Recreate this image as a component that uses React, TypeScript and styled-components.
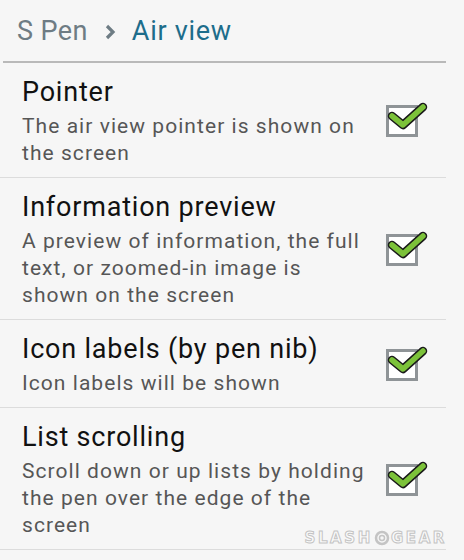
import React from 'react';
import styled, { createGlobalStyle } from 'styled-components';

const GlobalStyle = createGlobalStyle`
  html, body {
    margin: 0;
    padding: 0;
    background: #f6f6f6;
  }
  body {
    font-family: Roboto, "Noto Sans", "Liberation Sans", sans-serif;
    -webkit-font-smoothing: antialiased;
  }
`;

const Screen = styled.div`
  position: relative;
  width: 464px;
  height: 560px;
  overflow: hidden;
  background: #f6f6f6;
`;

const Header = styled.header`
  display: flex;
  align-items: center;
  gap: 16px;
  height: 61px;
  margin: 0 18px 0 3px;
  padding-left: 14px;
  border-bottom: 2px solid #b9b9b9;
  font-size: 27px;
`;

const Crumb = styled.span<{ $current?: boolean }>`
  color: ${({ $current }) => ($current ? '#1d6d8b' : '#6e7c84')};
  letter-spacing: ${({ $current }) => ($current ? '0.7px' : '0.4px')};
`;

const Chevron = styled.svg`
  width: 12px;
  height: 16px;
  margin-top: 2px;
`;

const List = styled.div`
  display: flex;
  flex-direction: column;
`;

const Row = styled.div`
  display: grid;
  grid-template-columns: 1fr 60px;
  align-items: center;
  column-gap: 6px;
  margin-right: 18px;
  padding: 12px 0 10px 22px;
  border-bottom: 1px solid #dcdcdc;
`;

const Texts = styled.div`
  display: flex;
  flex-direction: column;
  gap: 4px;
`;

const Title = styled.div`
  font-size: 27px;
  line-height: 34px;
  letter-spacing: 0.8px;
  color: #111;
  white-space: nowrap;
`;

const Description = styled.div`
  font-size: 21px;
  line-height: 27px;
  letter-spacing: 1.05px;
  color: #565656;
  max-width: 346px;
`;

const CheckBox = styled.span`
  position: relative;
  display: block;
  width: 26px;
  height: 26px;
  border: 3px solid #8f9497;
  background: #ffffff;
  justify-self: start;
`;

const CheckMark = styled.svg`
  position: absolute;
  left: 0;
  top: -6px;
  width: 38px;
  height: 30px;
  overflow: visible;
`;

const Watermark = styled.div`
  position: absolute;
  right: 17px;
  top: 529px;
  display: flex;
  align-items: center;
  gap: 1px;
  font-family: "DejaVu Sans", sans-serif;
  font-weight: bold;
  font-size: 15px;
  letter-spacing: 2.6px;
  color: #fbfbfb;
  -webkit-text-stroke: 1px #c4c4c4;
  pointer-events: none;
`;

const items = [
  { title: 'Pointer', desc: 'The air view pointer is shown on the screen' },
  {
    title: 'Information preview',
    desc: 'A preview of information, the full text, or zoomed-in image is shown on the screen',
  },
  { title: 'Icon labels (by pen nib)', desc: 'Icon labels will be shown' },
  {
    title: 'List scrolling',
    desc: 'Scroll down or up lists by holding the pen over the edge of the screen',
  },
];

const Check: React.FC = () => (
  <CheckBox>
    <CheckMark viewBox="0 0 38 30">
      <path
        d="M3 14 L14 23 L34 5"
        fill="none"
        stroke="#1a1a1a"
        strokeWidth="8.5"
        strokeLinecap="round"
        strokeLinejoin="round"
      />
      <path
        d="M3 14 L14 23 L34 5"
        fill="none"
        stroke="#7cc23a"
        strokeWidth="5.5"
        strokeLinecap="round"
        strokeLinejoin="round"
      />
    </CheckMark>
  </CheckBox>
);

const App: React.FC = () => {
  return (
    <Screen>
      <GlobalStyle />
      <Header>
        <Crumb>S Pen</Crumb>
        <Chevron viewBox="0 0 12 16">
          <path d="M3 2 L9 8 L3 14" fill="none" stroke="#6e7c84" strokeWidth="3.2" />
        </Chevron>
        <Crumb $current>Air view</Crumb>
      </Header>
      <List>
        {items.map((item) => (
          <Row key={item.title}>
            <Texts>
              <Title>{item.title}</Title>
              <Description>{item.desc}</Description>
            </Texts>
            <Check />
          </Row>
        ))}
      </List>
      <Watermark>
        <span>SLASH</span>
        <svg width="16" height="16" viewBox="0 0 16 16">
          <circle cx="8" cy="8" r="6" fill="none" stroke="#c4c4c4" strokeWidth="2.5" />
          <circle cx="8" cy="8" r="2.5" fill="none" stroke="#c4c4c4" strokeWidth="1.5" />
        </svg>
        <span>GEAR</span>
      </Watermark>
    </Screen>
  );
};

export default App;
